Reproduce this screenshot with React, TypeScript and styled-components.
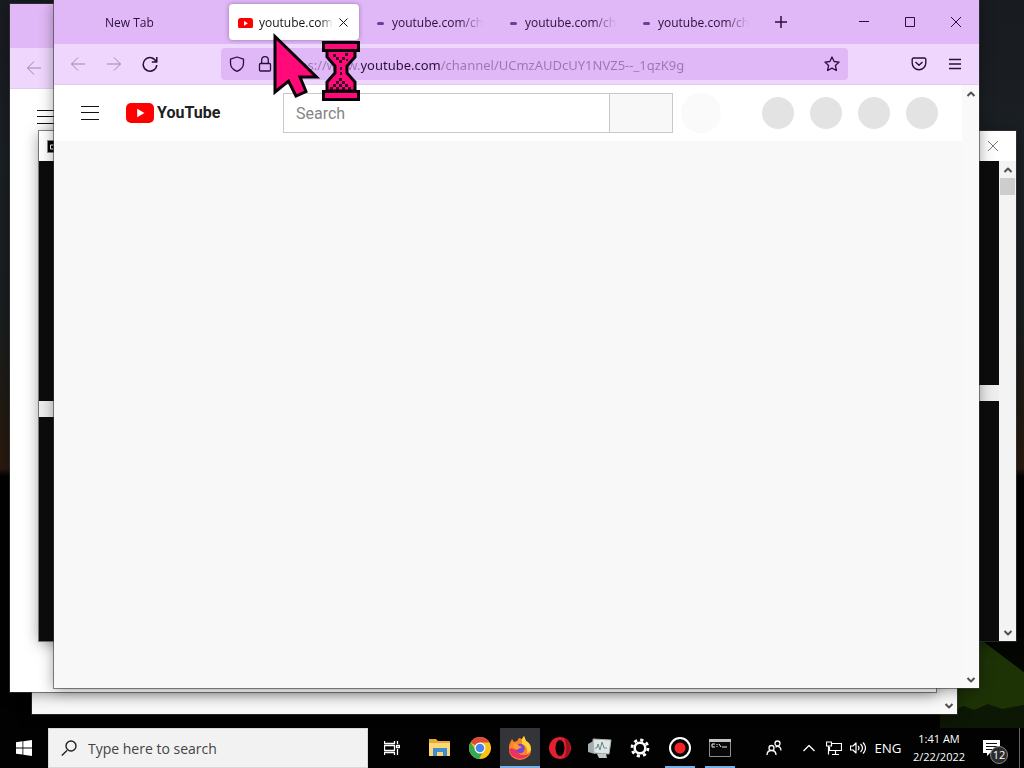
import React from "react";
import styled, { createGlobalStyle, css } from "styled-components";

const lilac = "#e0b8f7";
const lilacLight = "#efd6fc";
const ink = "#2b0f3c";
const pink = "#ff0a78";
const uiFont = `"Open Sans", "Noto Sans", sans-serif`;

const GlobalStyle = createGlobalStyle`
  * {
    box-sizing: border-box;
  }

  body {
    margin: 0;
    font-family: ${uiFont};
  }

  button,
  input {
    font-family: inherit;
    border: 0;
    padding: 0;
    margin: 0;
    background: none;
    color: inherit;
    outline: 0;
  }
`;

const Desktop = styled.div`
  position: relative;
  display: flex;
  flex-direction: column;
  justify-content: flex-end;
  height: 100vh;
  overflow: hidden;
  background: linear-gradient(
    #181b20 0,
    #1b2024 20%,
    #1a1e1f 42%,
    #221a12 54%,
    #2a1a10 61%,
    #020202 62%,
    #020202 100%
  );
`;

const Hill = styled.svg`
  position: absolute;
  right: 0;
  bottom: 40px;
  width: 84px;
  height: 90px;
`;

const Window = styled.section<{
  $top: number;
  $left: number;
  $right: number;
  $bottom: number;
}>`
  position: absolute;
  top: ${(props) => props.$top}px;
  left: ${(props) => props.$left}px;
  right: ${(props) => props.$right}px;
  bottom: ${(props) => props.$bottom}px;
  display: flex;
  flex-direction: column;
  background: #fff;
  box-shadow: 0 0 0 1px rgba(60, 60, 60, 0.6), 0 2px 14px rgba(0, 0, 0, 0.4);
`;

const TabStrip = styled.header`
  display: flex;
  flex: none;
  height: 44px;
  padding-left: 41px;
  background: ${lilac};
  color: ${ink};
`;

const Tab = styled.div<{ $active?: boolean }>`
  display: flex;
  align-items: center;
  flex: 0 1 130px;
  min-width: 0;
  height: 36px;
  margin: 4px 2px 4px 1px;
  padding: 0 9px;
  border-radius: 4px;

  ${(props) =>
    props.$active &&
    css`
      background: #fff;
      color: #15141a;
      box-shadow: 0 0 4px rgba(80, 40, 100, 0.5);
    `}
`;

const TabButton = styled.button`
  display: flex;
  align-items: center;
  flex: 1;
  min-width: 0;
  height: 100%;
  padding-top: 2px;
  text-align: left;
`;

const TabIcon = styled.span`
  display: flex;
  flex: none;
  width: 16px;
  margin-right: 5px;
`;

const TabLabel = styled.span<{ $fade: number }>`
  font-size: 12px;
  line-height: 18px;
  white-space: nowrap;
  mask-image: linear-gradient(
    to left,
    transparent,
    #000 ${(props) => props.$fade}px
  );
`;

const Throbber = styled.span`
  width: 7px;
  height: 3px;
  margin-left: 6px;
  border-radius: 2px;
  background: #6d3f92;
`;

const IconButton = styled.button<{ $width?: number }>`
  display: flex;
  align-items: center;
  justify-content: center;
  flex: none;
  width: ${(props) => props.$width ?? 36}px;
  height: 100%;
`;

const CloseTab = styled(IconButton)`
  width: 14px;
`;

const WindowControls = styled.div`
  display: flex;
  margin-left: auto;
`;

const Toolbar = styled.div`
  display: flex;
  align-items: center;
  flex: none;
  height: 41px;
  padding: 0 6px;
  background: ${lilacLight};
  border-bottom: 1px solid #e2cbee;
  color: ${ink};
`;

const UrlBar = styled.div`
  display: flex;
  align-items: center;
  flex: 1;
  height: 32px;
  margin: 0 53px;
  border-radius: 4px;
  background: ${lilac};
`;

const UrlInput = styled.input`
  flex: 1;
  min-width: 0;
  height: 100%;
  padding-top: 2px;
  margin-left: 5px;
  font-family: "Noto Sans", sans-serif;
  font-size: 13px;
  color: transparent;
  background: linear-gradient(
    90deg,
    #9a77b0 79px,
    ${ink} 79px,
    ${ink} 159px,
    #9a77b0 159px
  );
  background-clip: text;
`;

const Viewport = styled.div`
  display: flex;
  flex: 1;
  min-height: 0;
  background: #f8f8f8;
`;

const Page = styled.main`
  flex: 1;
  min-width: 0;
`;

const Masthead = styled.header`
  display: flex;
  align-items: center;
  height: 56px;
  padding: 0 24px 0 18px;
  background: #fff;
`;

const Logo = styled.a`
  display: flex;
  align-items: center;
  gap: 3px;
  width: 92px;
  margin-left: 18px;
  color: #212121;
  text-decoration: none;
  font: 700 16px/24px Roboto, sans-serif;

  svg {
    flex: none;
  }
`;

const SearchForm = styled.form`
  display: flex;
  flex: 0 1 390px;
  height: 40px;
  margin-left: 65px;
  border: 1px solid #c8c8c8;
`;

const SearchInput = styled.input`
  flex: 1;
  min-width: 0;
  padding: 0 12px;
  font-family: Roboto, sans-serif;
  font-size: 16px;

  &::placeholder {
    color: #858585;
    opacity: 1;
  }
`;

const SearchButton = styled.button`
  width: 63px;
  border-left: 1px solid #c8c8c8;
  background: #f8f8f8;
`;

const MicButton = styled.button`
  flex: none;
  width: 40px;
  height: 40px;
  margin-left: 8px;
  border-radius: 50%;
  background: #fafafa;
`;

const HeaderButtons = styled.div`
  display: flex;
  gap: 16px;
  margin-left: auto;
`;

const Placeholder = styled.button`
  width: 32px;
  height: 32px;
  border-radius: 50%;
  background: #e3e3e3;
`;

const ScrollBar = styled.div<{ $width: number }>`
  display: flex;
  flex-direction: column;
  align-items: center;
  flex: none;
  width: ${(props) => props.$width}px;
  background: #f3f3f3;
  color: #505050;
`;

const PageScrollBar = styled(ScrollBar)`
  background: #f9f9fa;
`;

const Thumb = styled.div`
  width: 15px;
  height: 17px;
  background: #cdcdcd;
`;

const ScrollArrow = styled.button`
  display: flex;
  align-items: center;
  justify-content: center;
  width: 100%;
  height: 17px;

  &:last-child {
    margin-top: auto;
  }
`;

const ConsoleTitle = styled.header`
  display: flex;
  align-items: center;
  justify-content: space-between;
  flex: none;
  height: 30px;
  padding: 0 16px 0 8px;
  color: #777;
`;

const ConsoleBody = styled.div`
  display: flex;
  flex: 1;
  min-height: 0;
`;

const ConsolePane = styled.div<{ $split: number }>`
  display: flex;
  flex-direction: column;
  flex: 1;
  background: #0c0c0c;

  &::before {
    content: "";
    height: 16px;
    margin-top: ${(props) => props.$split}px;
    background: linear-gradient(90deg, #eee, #ddd 50%, #eee);
  }
`;

const Pointer = styled.svg`
  position: absolute;
  top: 30px;
  left: 270px;
  width: 94px;
  height: 74px;
  pointer-events: none;
`;

const Taskbar = styled.footer`
  position: relative;
  display: flex;
  height: 40px;
  background: #020202;
  color: #fff;
`;

const TaskSearch = styled.label`
  display: flex;
  align-items: center;
  gap: 11px;
  flex: 0 1 320px;
  padding: 0 12px;
  border: 1px solid #d8d8d8;
  background: #f2f2f2;
  color: #222;

  input {
    flex: 1;
    min-width: 0;
    font-size: 14px;
  }

  input::placeholder {
    color: #444;
    opacity: 1;
  }
`;

const TaskButton = styled.button<{ $active?: boolean; $running?: boolean }>`
  display: flex;
  flex-direction: column;
  align-items: center;
  justify-content: center;
  position: relative;
  flex: none;
  width: 40px;
  background: ${(props) => (props.$active ? "#333538" : "none")};

  &::after {
    content: "";
    position: absolute;
    bottom: 0;
    width: ${(props) => (props.$active ? 40 : 30)}px;
    height: 2px;
    background: ${(props) => (props.$running ? "#76b0e8" : "none")};
  }
`;

const Apps = styled.nav`
  display: flex;
  margin-left: 4px;
`;

const Tray = styled.div`
  display: flex;
  align-items: center;
  margin-left: auto;
  font-size: 12px;
`;

const Clock = styled.button`
  display: flex;
  flex-direction: column;
  align-items: center;
  width: 64px;
  margin-left: 1px;
  font-size: 11px;
  line-height: 18px;
`;

const Notifications = styled.button`
  display: flex;
  position: relative;
  width: 17px;
  margin: 0 19px 0 12px;
`;

const Badge = styled.span`
  position: absolute;
  top: 6px;
  left: 7px;
  width: 18px;
  height: 18px;
  border: 1px solid #888;
  border-radius: 50%;
  background: #2b2b2b;
  font-size: 11px;
  line-height: 16px;
  text-align: center;
`;

const ShowDesktop = styled.button`
  width: 5px;
  height: 100%;
  border-left: 1px solid #666;
`;

function Line({
  d,
  size = 16,
  width = 1,
}: {
  d: string;
  size?: number;
  width?: number;
}) {
  return (
    <svg
      width={size}
      height={size}
      viewBox={`0 0 ${size} ${size}`}
      fill="none"
      stroke="currentColor"
      strokeWidth={width}
      strokeLinejoin="round"
    >
      <path d={d} />
    </svg>
  );
}

const paths = {
  back: "M15 8H1.5M8 1.5 1.5 8 8 14.5",
  forward: "M1 8h13.5M8 1.5 14.5 8 8 14.5",
  reload: "M14.2 5.5A6.8 6.8 0 1 0 14.8 9M14.8 1v5h-5",
  shield: "M8 1 14.5 3.2V7C14.5 11 12 13.8 8 15.3 4 13.8 1.5 11 1.5 7V3.2Z",
  lock: "M3.5 7.5h9a1 1 0 0 1 1 1v5.500a1 1 0 0 1-1 1h-9a1 1 0 0 1-1-1V8.500a1 1 0 0 1 1-1ZM4.700 7.500V4a3.300 3.300 0 0 1 6.600 0v3.500",
  star: "m8 1 2.100 4.500 5 .600-3.700 3.400 1 5L8 12.200l-4.400 2.300 1-5L.900 6.100l5-.600Z",
  pocket:
    "M2.500 2h11a1.300 1.300 0 0 1 1.300 1.300V7A6.800 6.800 0 0 1 1.200 7V3.300A1.300 1.300 0 0 1 2.500 2ZM4.500 6 8 9.300 11.500 6",
  menu: "M2 3.500h12M2 8h12M2 12.500h12",
  plus: "M8 2v12M2 8h12",
  minimize: "M3 7.500h10",
  maximize: "M3.500 3.500h9v9h-9z",
  close: "M3 3l10 10M13 3 3 13",
};

function Chevron({ down = false }: { down?: boolean }) {
  return (
    <Line
      size={10}
      width={2}
      d={down ? "M1.500 3 5 6.500 8.500 3" : "M1.500 7 5 3.500 8.500 7"}
    />
  );
}

function PlayMark({ width }: { width: number }) {
  return (
    <svg width={width} height={(width * 20) / 28} viewBox="0 0 28 20">
      <rect width="28" height="20" rx="5" fill="#f00" />
      <path d="M11.200 5.700v8.600L18.500 10z" fill="#fff" />
    </svg>
  );
}

function GuideButton() {
  return (
    <IconButton aria-label="Guide">
      <svg width="18" height="16" viewBox="0 0 18 16" stroke="#111">
        <path d="M0 1.500h18M0 7.500h18M0 14.500h18" />
      </svg>
    </IconButton>
  );
}

function BrowserTab({ title, loading }: { title: string; loading?: boolean }) {
  return (
    <Tab>
      <TabButton role="tab">
        {loading && (
          <TabIcon>
            <Throbber />
          </TabIcon>
        )}
        <TabLabel $fade={loading ? 24 : 1}>{title}</TabLabel>
      </TabButton>
    </Tab>
  );
}

function BackgroundBrowser() {
  return (
    <Window $top={4} $left={10} $right={88} $bottom={76}>
      <TabStrip />
      <Toolbar>
        <IconButton aria-label="Back" style={{ opacity: 0.4 }}>
          <Line d={paths.back} />
        </IconButton>
      </Toolbar>
      <Masthead>
        <GuideButton />
      </Masthead>
    </Window>
  );
}

function Console() {
  return (
    <Window $top={131} $left={39} $right={8} $bottom={127}>
      <ConsoleTitle>
        <svg width="16" height="13" viewBox="0 0 16 13">
          <path d="M.500.500h15v12H.500z" fill="#050505" stroke="#888" />
          <path
            d="M6.500 5H3.500v4h3M9 4.500v1M9 8v1"
            stroke="#fff"
            fill="none"
          />
        </svg>
        <IconButton $width={14} aria-label="Close console">
          <Line d="M2 2l10 10M12 2 2 12" size={14} />
        </IconButton>
      </ConsoleTitle>
      <ConsoleBody>
        <ConsolePane $split={240} />
        <ConsolePane $split={224} />
        <ScrollBar $width={17}>
          <ScrollArrow aria-label="Scroll up">
            <Chevron />
          </ScrollArrow>
          <Thumb />
          <ScrollArrow aria-label="Scroll down">
            <Chevron down />
          </ScrollArrow>
        </ScrollBar>
      </ConsoleBody>
    </Window>
  );
}

function Browser() {
  return (
    <Window $top={0} $left={54} $right={45} $bottom={80}>
      <TabStrip>
        <BrowserTab title="New Tab" />
        <Tab $active>
          <TabButton role="tab" aria-selected>
            <TabIcon>
              <PlayMark width={15} />
            </TabIcon>
            <TabLabel $fade={12}>youtube.com</TabLabel>
          </TabButton>
          <CloseTab aria-label="Close tab">
            <Line d="M1.500 1.500l8 8M9.500 1.500l-8 8" size={11} />
          </CloseTab>
        </Tab>
        <BrowserTab title="youtube.com/ch" loading />
        <BrowserTab title="youtube.com/ch" loading />
        <BrowserTab title="youtube.com/ch" loading />
        <IconButton aria-label="New tab" $width={42}>
          <Line d={paths.plus} width={1.5} />
        </IconButton>
        <WindowControls>
          <IconButton $width={46} aria-label="Minimize">
            <Line d={paths.minimize} />
          </IconButton>
          <IconButton $width={46} aria-label="Maximize">
            <Line d={paths.maximize} />
          </IconButton>
          <IconButton $width={46} aria-label="Close">
            <Line d={paths.close} />
          </IconButton>
        </WindowControls>
      </TabStrip>
      <Toolbar>
        <IconButton aria-label="Back" disabled style={{ opacity: 0.4 }}>
          <Line d={paths.back} />
        </IconButton>
        <IconButton aria-label="Forward" disabled style={{ opacity: 0.4 }}>
          <Line d={paths.forward} />
        </IconButton>
        <IconButton aria-label="Reload">
          <Line d={paths.reload} width={1.5} />
        </IconButton>
        <UrlBar>
          <IconButton $width={32} aria-label="Tracking protection">
            <Line d={paths.shield} width={1.3} />
          </IconButton>
          <IconButton $width={24} aria-label="Site security">
            <Line d={paths.lock} width={1.3} />
          </IconButton>
          <UrlInput
            aria-label="Address"
            defaultValue="https://www.youtube.com/channel/UCmzAUDcUY1NVZ5--_1qzK9g"
          />
          <IconButton $width={32} aria-label="Bookmark">
            <Line d={paths.star} width={1.3} />
          </IconButton>
        </UrlBar>
        <IconButton aria-label="Pocket">
          <Line d={paths.pocket} width={1.4} />
        </IconButton>
        <IconButton aria-label="Menu">
          <Line d={paths.menu} width={1.5} />
        </IconButton>
      </Toolbar>
      <Viewport>
        <Page>
          <Masthead>
            <GuideButton />
            <Logo href="#">
              <PlayMark width={28} />
              YouTube
            </Logo>
            <SearchForm>
              <SearchInput aria-label="Search" placeholder="Search" />
              <SearchButton type="button" aria-label="Submit search" />
            </SearchForm>
            <MicButton aria-label="Voice search" />
            <HeaderButtons>
              {["Create", "Apps", "Notices", "Account"].map((label) => (
                <Placeholder key={label} aria-label={label} />
              ))}
            </HeaderButtons>
          </Masthead>
        </Page>
        <PageScrollBar $width={17}>
          <ScrollArrow aria-label="Page up">
            <Chevron />
          </ScrollArrow>
          <ScrollArrow aria-label="Page down">
            <Chevron down />
          </ScrollArrow>
        </PageScrollBar>
      </Viewport>
    </Window>
  );
}

function BusyPointer() {
  return (
    <Pointer viewBox="0 0 94 74">
      <g fill={pink} stroke="#080208" strokeWidth="3">
        <path d="M5 6.500V62l13.500-11L26 66l10-4.500-6-14.500h16.500z" />
        <path d="M57 20h28v7l-8 9v7l8 9v9H57v-9l8-9v-7l-8-9z" />
        <path d="M53.500 12.500h35v8h-35zM53.500 61.500h35v8h-35z" />
      </g>
      <path
        fill="#3a0524"
        d="M63 24h3v3h-3zM75 23h3v3h-3zM66 27h3v3h-3zM72 27h3v3h-3zM69 30h3v3h-3zM76 29h2v2h-2zM70 37h2v3h-2zM70 42h2v3h-2zM69 48h3v3h-3zM66 51h3v3h-3zM72 51h3v3h-3zM63 54h3v3h-3zM69 54h3v3h-3zM75 54h3v3h-3zM60 57h3v3h-3zM66 57h3v3h-3zM72 57h3v3h-3zM78 57h3v3h-3z"
      />
    </Pointer>
  );
}

const apps: {
  name: string;
  active?: boolean;
  running?: boolean;
  icon: React.ReactNode;
}[] = [
  {
    name: "File Explorer",
    icon: (
      <>
        <path d="M1 3h7l2 2h12v15H1z" fill="#e5aa37" />
        <path d="M1 7h21v13H1z" fill="#fbd775" />
        <path d="M5 12h14v8h-4v-4H9v4H5z" fill="#3f8fd0" />
      </>
    ),
  },
  {
    name: "Chrome",
    icon: (
      <>
        <circle cx="12" cy="12" r="11" fill="#fbc116" />
        <path d="M12 12 2.500 6.500A11 11 0 0 1 21.500 6.500H12z" fill="#df4937" />
        <path d="M2.500 6.500A11 11 0 0 0 11 23l5-9-8 0z" fill="#36a853" />
        <circle cx="12" cy="12" r="5.500" fill="#fff" />
        <circle cx="12" cy="12" r="4.300" fill="#4387ee" />
      </>
    ),
  },
  {
    name: "Firefox",
    active: true,
    running: true,
    icon: (
      <>
        <path
          d="M2 7 4 3l2 3 3-1 2-3 3 1 2-3 2 5c4 2 5 5 5 9a11 10 0 0 1-22 0c0-3 0-5 1-7z"
          fill="#ff8524"
        />
        <path d="M1 13a11 10 0 0 0 21 4c-4 3-9 3-12 0-3-3-4-6-9-4z" fill="#f2305f" />
        <path d="M14 3l2-3 2 5c4 2 5 5 5 9l-4 4c1-6-1-8-5-10z" fill="#ffd43b" />
        <circle cx="12" cy="12.500" r="4.800" fill="#7a48cf" />
        <path d="M5 8c3-1 5 0 6 2l3 1c-2 2-4 1-5 3-3-1-4-3-4-6z" fill="#ff9b2c" />
      </>
    ),
  },
  {
    name: "Opera",
    icon: (
      <>
        <ellipse cx="12" cy="12" rx="11" ry="11" fill="#e2202f" />
        <path d="M16 2a11 11 0 0 1 0 20c3-5 3-15 0-20z" fill="#9c1020" />
        <ellipse cx="12" cy="12" rx="4.500" ry="8" fill="#020202" />
      </>
    ),
  },
  {
    name: "System Monitor",
    icon: (
      <>
        <path d="M0 8l7-4v14l-7-2z" fill="#a4adb0" />
        <path d="M5 3l18 1-2 14-15-1z" fill="#dfe6e6" stroke="#aab3b2" />
        <path d="M7 12h2l1-4 2 6 2-8 2 6h3" fill="none" stroke="#6b898b" />
        <path d="M9 18l9 0 1 4H11z" fill="#c2caca" />
      </>
    ),
  },
  {
    name: "Settings",
    icon: (
      <g fill="none" stroke="#fff">
        <circle cx="12" cy="12" r="5.300" strokeWidth="2.500" />
        <circle
          cx="12"
          cy="12"
          r="8"
          strokeWidth="2.800"
          strokeDasharray="3.140 3.143"
        />
      </g>
    ),
  },
  {
    name: "Recorder",
    running: true,
    icon: (
      <>
        <circle cx="12" cy="12" r="10" fill="#080808" stroke="#fff" strokeWidth="2" />
        <circle cx="12" cy="12" r="5.500" fill="#f32329" />
      </>
    ),
  },
  {
    name: "Command Prompt",
    running: true,
    icon: (
      <>
        <path d="M1.500 3.500h21v17h-21z" fill="#080808" stroke="#8e8e8e" />
        <path d="M1 3h22v3H1z" fill="#bfc5c9" />
        <path
          d="M7 8H4v3h3M9 8v1M9 10v1M11 8l2 3M14 11h5"
          fill="none"
          stroke="#eee"
        />
      </>
    ),
  },
];

function DesktopTaskbar() {
  return (
    <Taskbar>
      <IconButton $width={48} aria-label="Start">
        <svg width="16" height="16" viewBox="0 0 16 16" fill="#fff">
          <path d="M0 2.200 6.500 1.300v6.200H0zM7.300 1.200 16 0v7.500H7.300zM0 8.400h6.500v6.200L0 13.700zM7.300 8.400H16V16l-8.700-1.200z" />
        </svg>
      </IconButton>
      <TaskSearch>
        <Line d="M6 10.500.800 15.500M15 6a5 5 0 1 1-10 0 5 5 0 0 1 10 0z" width={1.4} />
        <input aria-label="Search Windows" placeholder="Type here to search" />
      </TaskSearch>
      <IconButton $width={48} aria-label="Task view">
        <Line
          d="M.500 1v2.500h10V1M.500 15v-2.500h10V15M.500 5.500h10v5H.500zM13.500 1v3M13.500 9v6M12.500 5.500h3v2h-3z"
          width={1.3}
        />
      </IconButton>
      <Apps>
        {apps.map((app, i) => (
          <TaskButton
            key={i}
            aria-label={app.name}
            $active={app.active}
            $running={app.running}
          >
            <svg width="24" height="24" viewBox="0 0 24 24">
              {app.icon}
            </svg>
          </TaskButton>
        ))}
      </Apps>
      <Tray>
        <IconButton $width={44} aria-label="People">
          <Line
            d="M8 8a2.500 2.500 0 1 1-5 0 2.500 2.500 0 0 1 5 0zM1 15c0-6 9-6 9 0M14 3.500a2.500 2.500 0 1 1-5 0 2.500 2.500 0 0 1 5 0zM9.500 7.200c3-2 5.500 0 5.500 3.300"
            width={1.3}
          />
        </IconButton>
        <IconButton $width={26} aria-label="Hidden icons">
          <Line d="M2.500 11 8 5.500l5.500 5.500" width={1.3} />
        </IconButton>
        <IconButton $width={24} aria-label="Network">
          <Line
            d="M6 3.500h9.500v7H3.500V7M9.500 10.500v4M6 14.500h7M.500 2h5v4h-5zM2.500 6v8.500"
            width={1.2}
          />
        </IconButton>
        <IconButton $width={24} aria-label="Volume">
          <Line
            d="M.500 6h2.500l3-3v10l-3-3H.500zM8 6q2 2 0 4M10.500 4q4 4 0 8M13 2.500q5 5.500 0 11"
            width={1.2}
          />
        </IconButton>
        <IconButton $width={36} aria-label="Language">
          ENG
        </IconButton>
        <Clock>
          <span>1:41 AM</span>
          <span>2/22/2022</span>
        </Clock>
        <Notifications aria-label="Notifications">
          <svg width="17" height="16" viewBox="0 0 17 16">
            <path d="M0 0h17v13H7l-3 3v-3H0z" fill="#fff" />
            <path d="M3 3.500h11M3 6.500h11M3 9.500h7" stroke="#111" />
          </svg>
          <Badge>12</Badge>
        </Notifications>
        <ShowDesktop aria-label="Show desktop" />
      </Tray>
    </Taskbar>
  );
}

export default function App() {
  return (
    <Desktop>
      <GlobalStyle />
      <Hill viewBox="0 0 84 90" preserveAspectRatio="none">
        <path d="M0 0h39l45 34v37L64 82 0 76z" fill="#1d3306" />
        <path d="M39 0h45v34z" fill="#030602" />
        <path d="M0 76l24-8 10 4 14-6 14 5 22-4v23H0z" fill="#0d1705" />
      </Hill>
      <Window $top={40} $left={32} $right={67} $bottom={54}>
        <Viewport>
          <Page />
          <PageScrollBar $width={17}>
            <ScrollArrow aria-label="Scroll page down">
              <Chevron down />
            </ScrollArrow>
          </PageScrollBar>
        </Viewport>
      </Window>
      <BackgroundBrowser />
      <Console />
      <Browser />
      <BusyPointer />
      <DesktopTaskbar />
    </Desktop>
  );
}
